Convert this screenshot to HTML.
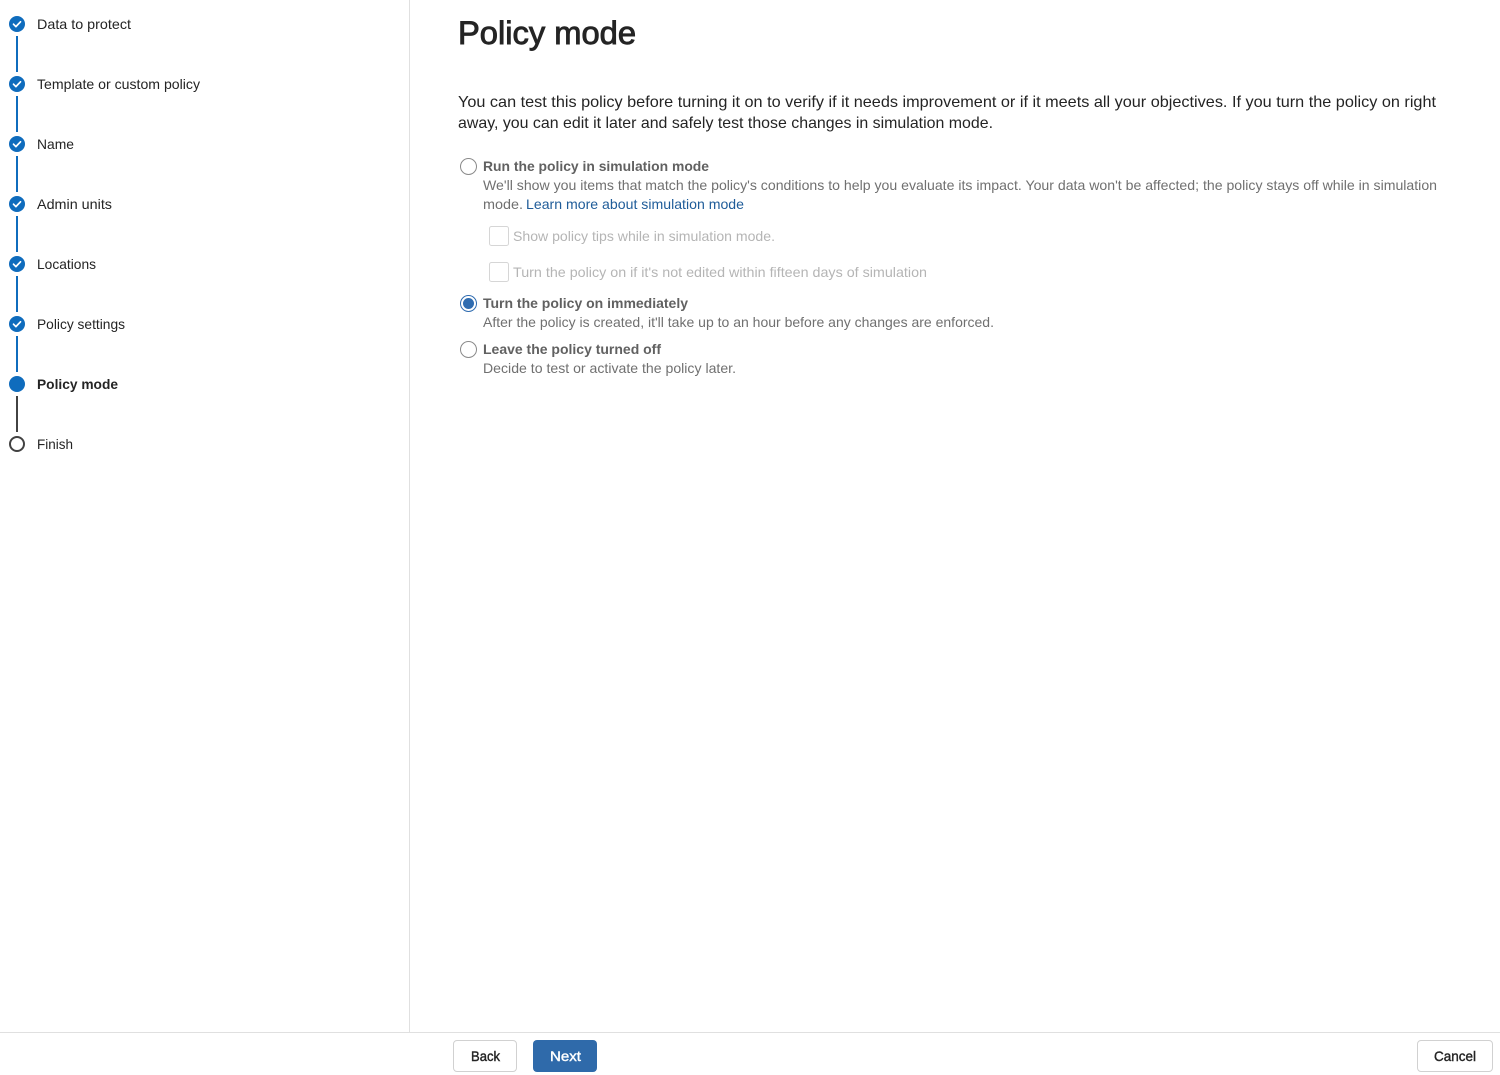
<!DOCTYPE html>
<html lang="en">
<head>
<meta charset="utf-8">
<title>Policy mode</title>
<style>
html,body{margin:0;padding:0;background:#fff;width:1500px;height:1075px;overflow:hidden}
svg{display:block}
text{font-family:"Liberation Sans",sans-serif;font-size:14px}
.s{fill:#242424}
.o{fill:#616161;font-weight:700}
.d{fill:#707070}
.c{fill:#b5b5b5}
.b{fill:#242424;stroke:#242424;stroke-width:.4}
</style>
</head>
<body>
<svg width="1500" height="1075" viewBox="0 0 1500 1075" xmlns="http://www.w3.org/2000/svg">
<!-- dividers -->
<rect x="409" y="0" width="1" height="1032" fill="#e0e0e0"/>
<rect x="0" y="1032" width="1500" height="1" fill="#e0e0e0"/>

<!-- stepper connectors -->
<g fill="#0f6cbd">
<rect x="16" y="36" width="2" height="36"/>
<rect x="16" y="96" width="2" height="36"/>
<rect x="16" y="156" width="2" height="36"/>
<rect x="16" y="216" width="2" height="36"/>
<rect x="16" y="276" width="2" height="36"/>
<rect x="16" y="336" width="2" height="36"/>
</g>
<rect x="16" y="396" width="2" height="36" fill="#424242"/>

<!-- stepper dots -->
<g fill="#0f6cbd">
<circle cx="17" cy="24" r="8"/>
<circle cx="17" cy="84" r="8"/>
<circle cx="17" cy="144" r="8"/>
<circle cx="17" cy="204" r="8"/>
<circle cx="17" cy="264" r="8"/>
<circle cx="17" cy="324" r="8"/>
<circle cx="17" cy="384" r="8"/>
</g>
<g fill="none" stroke="#fff" stroke-width="1.7" stroke-linecap="round" stroke-linejoin="round">
<path d="M13.500 24.200l2.400 2.400 4.600-4.800"/>
<path d="M13.500 84.200l2.400 2.400 4.600-4.800"/>
<path d="M13.500 144.200l2.400 2.400 4.600-4.800"/>
<path d="M13.500 204.200l2.400 2.400 4.600-4.800"/>
<path d="M13.500 264.200l2.400 2.400 4.600-4.800"/>
<path d="M13.500 324.200l2.400 2.400 4.600-4.800"/>
</g>
<circle cx="17" cy="444" r="7" fill="#fff" stroke="#424242" stroke-width="2"/>

<!-- stepper labels -->
<text class="s" x="37" y="29" textLength="94" lengthAdjust="spacingAndGlyphs">Data to protect</text>
<text class="s" x="37" y="89" textLength="163" lengthAdjust="spacingAndGlyphs">Template or custom policy</text>
<text class="s" x="37" y="149" textLength="37" lengthAdjust="spacingAndGlyphs">Name</text>
<text class="s" x="37" y="209" textLength="75" lengthAdjust="spacingAndGlyphs">Admin units</text>
<text class="s" x="37" y="269" textLength="59" lengthAdjust="spacingAndGlyphs">Locations</text>
<text class="s" x="37" y="329" textLength="88" lengthAdjust="spacingAndGlyphs">Policy settings</text>
<text class="s" x="37" y="389" textLength="81" lengthAdjust="spacingAndGlyphs" style="font-weight:700">Policy mode</text>
<text class="s" x="37" y="449" textLength="36" lengthAdjust="spacingAndGlyphs">Finish</text>

<!-- heading and intro -->
<text class="s" x="458" y="44" textLength="178" lengthAdjust="spacingAndGlyphs" style="font-size:32px;stroke:#242424;stroke-width:.9">Policy mode</text>
<text class="s" x="458" y="107" textLength="978" lengthAdjust="spacingAndGlyphs" style="font-size:16px">You can test this policy before turning it on to verify if it needs improvement or if it meets all your objectives. If you turn the policy on right</text>
<text class="s" x="458" y="128" textLength="535" lengthAdjust="spacingAndGlyphs" style="font-size:16px">away, you can edit it later and safely test those changes in simulation mode.</text>

<!-- option 1 -->
<circle cx="468.500" cy="166.500" r="8" fill="#fff" stroke="#8a8a8a" stroke-width="1"/>
<text class="o" x="483" y="171" textLength="226" lengthAdjust="spacingAndGlyphs">Run the policy in simulation mode</text>
<text class="d" x="483" y="190" textLength="954" lengthAdjust="spacingAndGlyphs">We'll show you items that match the policy's conditions to help you evaluate its impact. Your data won't be affected; the policy stays off while in simulation</text>
<text class="d" x="483" y="209" textLength="40" lengthAdjust="spacingAndGlyphs">mode.</text>
<text x="526" y="209" textLength="218" lengthAdjust="spacingAndGlyphs" fill="#1f5c99">Learn more about simulation mode</text>

<!-- sub checkboxes -->
<rect x="489.500" y="226.500" width="19" height="19" rx="2" fill="#fff" stroke="#d6d6d6"/>
<text class="c" x="513" y="241" textLength="262" lengthAdjust="spacingAndGlyphs">Show policy tips while in simulation mode.</text>
<rect x="489.500" y="262.500" width="19" height="19" rx="2" fill="#fff" stroke="#d6d6d6"/>
<text class="c" x="513" y="277" textLength="414" lengthAdjust="spacingAndGlyphs">Turn the policy on if it's not edited within fifteen days of simulation</text>

<!-- option 2 -->
<circle cx="468.500" cy="303.500" r="8" fill="#fff" stroke="#2f6cb0" stroke-width="1"/>
<circle cx="468.500" cy="303.500" r="5.500" fill="#2f6cb0"/>
<text class="o" x="483" y="308" textLength="205" lengthAdjust="spacingAndGlyphs">Turn the policy on immediately</text>
<text class="d" x="483" y="327" textLength="511" lengthAdjust="spacingAndGlyphs">After the policy is created, it'll take up to an hour before any changes are enforced.</text>

<!-- option 3 -->
<circle cx="468.500" cy="349.500" r="8" fill="#fff" stroke="#8a8a8a" stroke-width="1"/>
<text class="o" x="483" y="354" textLength="178" lengthAdjust="spacingAndGlyphs">Leave the policy turned off</text>
<text class="d" x="483" y="373" textLength="253" lengthAdjust="spacingAndGlyphs">Decide to test or activate the policy later.</text>

<!-- footer buttons -->
<rect x="453.500" y="1040.500" width="63" height="31" rx="3.500" fill="#fff" stroke="#d1d1d1"/>
<text class="b" x="471" y="1061" textLength="29" lengthAdjust="spacingAndGlyphs">Back</text>
<rect x="533" y="1040" width="64" height="32" rx="4" fill="#2f6aaa"/>
<text x="550" y="1061" textLength="31" lengthAdjust="spacingAndGlyphs" fill="#fff" stroke="#fff" stroke-width=".4">Next</text>
<rect x="1417.500" y="1040.500" width="75" height="31" rx="3.500" fill="#fff" stroke="#d1d1d1"/>
<text class="b" x="1434" y="1061" textLength="42" lengthAdjust="spacingAndGlyphs">Cancel</text>
</svg>
</body>
</html>
